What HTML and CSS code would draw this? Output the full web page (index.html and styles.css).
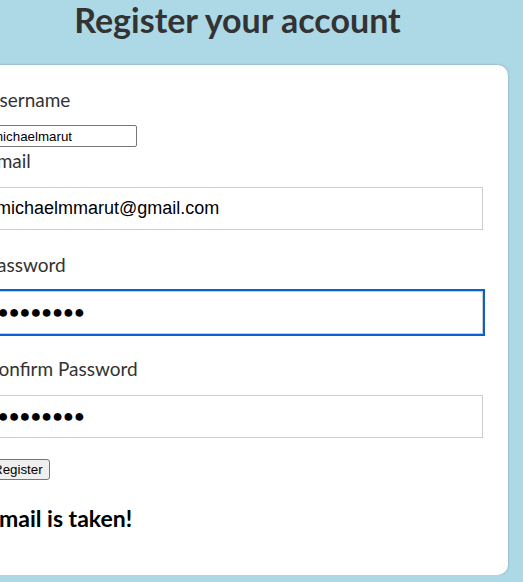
FILE: index.html
```html
<!DOCTYPE html>
<html>
<head>
<meta charset="utf-8">
<title>Register</title>
<link rel="stylesheet" href="styles.css">
</head>
<body>
<div class="page">
  <h1 class="title">Register your account</h1>
  <form class="card">
    <label class="label first">Username</label>
    <input class="small-input" type="text" value="michaelmarut">
    <label class="label tight">Email</label>
    <input class="field" type="text" value="michaelmmarut@gmail.com">
    <label class="label">Password</label>
    <input class="field dots focused" type="text" value="●●●●●●●●●" aria-label="Password">
    <label class="label">Confirm Password</label>
    <input class="field dots" type="text" value="●●●●●●●●●" aria-label="Confirm Password">
    <button class="btn" type="button">Register</button>
    <h3 class="error">Email is taken!</h3>
  </form>
</div>
</body>
</html>
```

FILE: styles.css
```css
html, body {
  margin: 0;
  padding: 0;
  background: #add8e6;
  overflow: hidden;
}
.page {
  margin-left: -39px;
  width: 547px;
}
.title {
  font-family: Lato, "Noto Sans", sans-serif;
  font-weight: 700;
  font-size: 34px;
  color: #333;
  text-align: center;
  margin: 0 0 25px 0;
  padding-left: 6px;
  line-height: 40px;
}
.card {
  background: #fff;
  border-radius: 10px;
  box-shadow: 0 0 2px rgba(0,0,0,0.35);
  padding: 24px 25px 0 25px;
  display: flex;
  flex-direction: column;
  align-items: flex-start;
  height: 510px;
  box-sizing: border-box;
}
.card > * {
  flex-shrink: 0;
}
.label {
  font-family: Lato, "Noto Sans", sans-serif;
  font-size: 19px;
  color: #333;
  line-height: 22px;
  margin: 24px 0 15px 0;
}
.label.first { margin-top: 0; margin-bottom: 14px; }
.label.tight { margin-top: 3px; margin-bottom: 15px; }
.small-input {
  width: 151px;
  height: 22px;
  box-sizing: border-box;
  font-family: "Liberation Sans", Arial, sans-serif;
  font-size: 13.33px;
  padding: 1px 2px 1px 5px;
  border: 1px solid #767676;
  border-radius: 2px;
  margin: 0;
}
.field {
  width: 100%;
  height: 43px;
  box-sizing: border-box;
  border: 1px solid #ccc;
  padding: 0 10px 0 9px;
  font-family: "Liberation Sans", Arial, sans-serif;
  font-size: 18px;
  color: #000;
  margin: 0;
  outline: none;
}
.field.dots {
  font-size: 18px;
  text-indent: -9px;
}
.field.focused {
  outline: 2px solid #0a5fd6;
}
.btn {
  margin-top: 21px;
  font-family: "Liberation Sans", Arial, sans-serif;
  font-size: 13.33px;
  height: 21px;
  padding: 1px 6px;
  border: 1px solid #767676;
  border-radius: 3px;
  background: #efefef;
  color: #000;
}
.error {
  font-family: Lato, "Noto Sans", sans-serif;
  font-weight: 700;
  font-size: 23px;
  color: #000;
  margin: 24px 0 0 0;
}
```
